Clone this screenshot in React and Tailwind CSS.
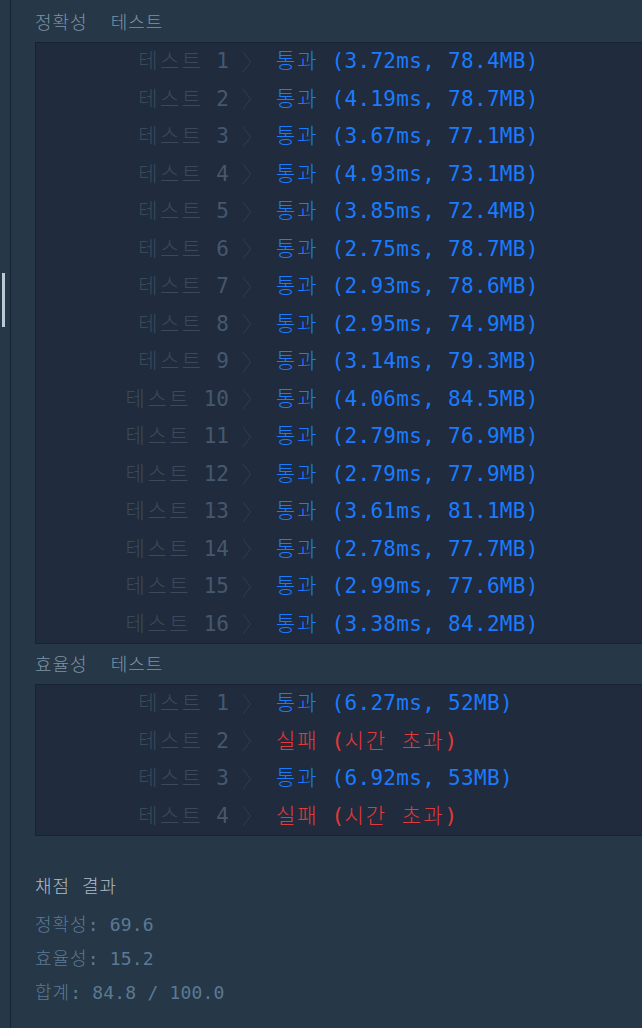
const mono = { fontFamily: '"DejaVu Sans Mono", "Noto Sans CJK KR", monospace' };

const accuracy = [
  ['3.72ms', '78.4MB'],
  ['4.19ms', '78.7MB'],
  ['3.67ms', '77.1MB'],
  ['4.93ms', '73.1MB'],
  ['3.85ms', '72.4MB'],
  ['2.75ms', '78.7MB'],
  ['2.93ms', '78.6MB'],
  ['2.95ms', '74.9MB'],
  ['3.14ms', '79.3MB'],
  ['4.06ms', '84.5MB'],
  ['2.79ms', '76.9MB'],
  ['2.79ms', '77.9MB'],
  ['3.61ms', '81.1MB'],
  ['2.78ms', '77.7MB'],
  ['2.99ms', '77.6MB'],
  ['3.38ms', '84.2MB'],
];

const efficiency = [['6.27ms', '52MB'], null, ['6.92ms', '53MB'], null];

function Chevron() {
  return (
    <svg width="10" height="22" viewBox="0 0 10 22" className="shrink-0">
      <polyline points="1,1 8.5,11 1,21" fill="none" stroke="#2d3a4c" strokeWidth="1.2" />
    </svg>
  );
}

function Row({ n, result }) {
  return (
    <div className="flex h-[37.5px] items-center whitespace-pre text-[21px]">
      <div className="w-[193px] shrink-0 text-right">
        <span className="font-light tracking-[2.5px] text-[#3a495c]">테스트</span>
        <span className="text-[#46586f]"> {n}</span>
      </div>
      <div className="ml-[13px]">
        <Chevron />
      </div>
      <div className="ml-[24px] tracking-[0.3px]">
        {result ? (
          <span className="text-[#1a7bff]">
            <span className="font-light tracking-[2px]">통과</span> ({result[0]}, {result[1]})
          </span>
        ) : (
          <span className="text-[#e23a3a]">
            <span className="font-light tracking-[2px]">실패</span> (
            <span className="font-light tracking-[2px]">시간 초과</span>)
          </span>
        )}
      </div>
    </div>
  );
}

function Header({ title, className }) {
  return (
    <div className={`flex items-center gap-[23px] text-[18px] font-light tracking-[1px] text-[#7d93a5] ${className}`}>
      <span>{title}</span>
      <span>테스트</span>
    </div>
  );
}

export default function App() {
  return (
    <div className="flex h-[1028px] w-[642px] overflow-hidden bg-[#263747]" style={mono}>
      <div className="w-[10px] shrink-0 pl-[2px] pt-[273px]">
        <div className="h-[54px] w-[3px] bg-[#bccad6]" />
      </div>
      <div className="w-px shrink-0 bg-[#172334]" />
      <div className="min-w-0 flex-1 pl-6">
        <Header title="정확성" className="h-[42px] pt-[2px]" />
        <div className="w-[640px] border border-[#172334] bg-[#202b3d]">
          {accuracy.map((r, i) => (
            <Row key={i} n={i + 1} result={r} />
          ))}
        </div>
        <Header title="효율성" className="h-[40px]" />
        <div className="w-[640px] border border-[#172334] bg-[#202b3d]">
          {efficiency.map((r, i) => (
            <Row key={i} n={i + 1} result={r} />
          ))}
        </div>
        <div className="mt-[36px] flex h-[28px] items-center text-[18px] font-light tracking-[1px] text-[#aebdca]">
          채점 결과
        </div>
        <div className="mt-[7px] text-[18px] tracking-[0.2px] text-[#5b7a95]">
          <div className="flex h-[34px] items-center whitespace-pre">
            <span className="font-light tracking-[1px]">정확성</span>: 69.6
          </div>
          <div className="flex h-[34px] items-center whitespace-pre">
            <span className="font-light tracking-[1px]">효율성</span>: 15.2
          </div>
          <div className="flex h-[34px] items-center whitespace-pre">
            <span className="font-light tracking-[1px]">합계</span>: 84.8 / 100.0
          </div>
        </div>
      </div>
    </div>
  );
}
